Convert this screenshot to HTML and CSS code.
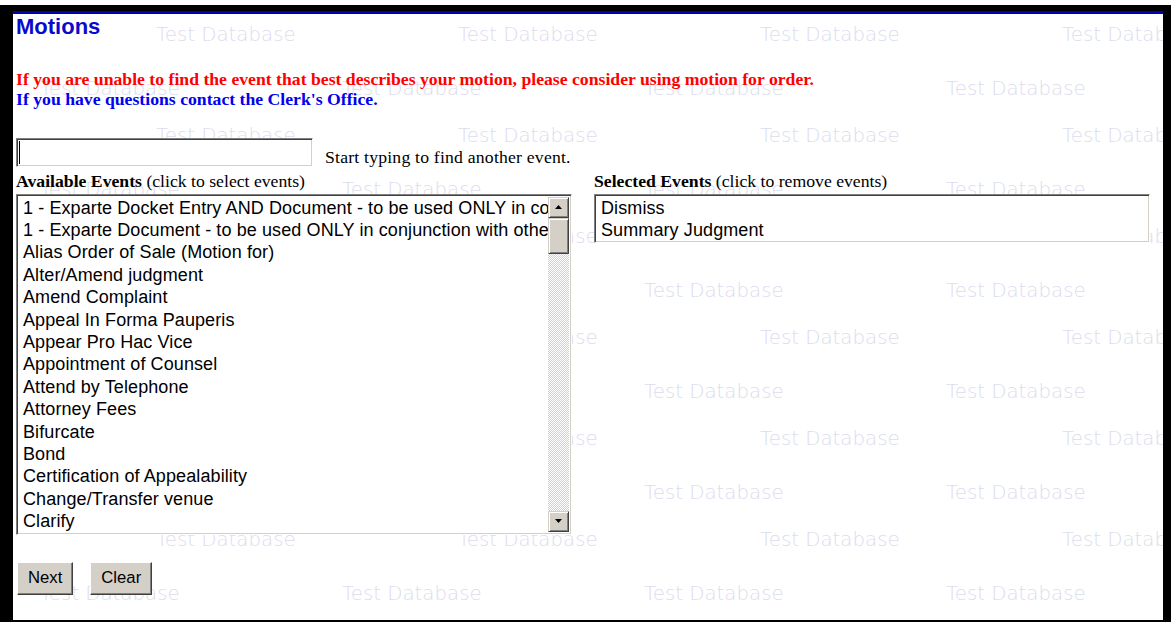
FILE: index.html
```html
<!DOCTYPE html>
<html lang="en">
<head>
<meta charset="utf-8">
<title>Motions</title>
<link rel="stylesheet" href="styles.css">
</head>
<body>
<div class="frame">
  <div class="watermark" aria-hidden="true">
    <div class="wm-row odd"><span>Test Database</span><span>Test Database</span><span>Test Database</span><span>Test Database</span></div>
    <div class="wm-row even"><span>Test Database</span><span>Test Database</span><span>Test Database</span><span>Test Database</span></div>
    <div class="wm-row odd"><span>Test Database</span><span>Test Database</span><span>Test Database</span><span>Test Database</span></div>
    <div class="wm-row even"><span>Test Database</span><span>Test Database</span><span>Test Database</span><span>Test Database</span></div>
    <div class="wm-row odd"><span>Test Database</span><span>Test Database</span><span>Test Database</span><span>Test Database</span></div>
    <div class="wm-row even"><span>Test Database</span><span>Test Database</span><span>Test Database</span><span>Test Database</span></div>
    <div class="wm-row odd"><span>Test Database</span><span>Test Database</span><span>Test Database</span><span>Test Database</span></div>
    <div class="wm-row even"><span>Test Database</span><span>Test Database</span><span>Test Database</span><span>Test Database</span></div>
    <div class="wm-row odd"><span>Test Database</span><span>Test Database</span><span>Test Database</span><span>Test Database</span></div>
    <div class="wm-row even"><span>Test Database</span><span>Test Database</span><span>Test Database</span><span>Test Database</span></div>
    <div class="wm-row odd"><span>Test Database</span><span>Test Database</span><span>Test Database</span><span>Test Database</span></div>
    <div class="wm-row even"><span>Test Database</span><span>Test Database</span><span>Test Database</span><span>Test Database</span></div>
  </div>

  <main class="page">
    <h1 class="title">Motions</h1>

    <p class="notice warn">If you are unable to find the event that best describes your motion, please consider using motion for order.</p>
    <p class="notice info">If you have questions contact the Clerk's Office.</p>

    <div class="search-row">
      <span class="field"><input class="search" type="text" aria-label="Find event"></span>
      <span class="hint">Start typing to find another event.</span>
    </div>

    <div class="events">
      <section class="col">
        <div class="col-label"><b>Available Events</b> (click to select events)</div>
        <div class="listbox tall">
          <ul class="options">
            <li>1 - Exparte Docket Entry AND Document - to be used ONLY in conjunction with other events</li>
            <li>1 - Exparte Document - to be used ONLY in conjunction with other events</li>
            <li>Alias Order of Sale (Motion for)</li>
            <li>Alter/Amend judgment</li>
            <li>Amend Complaint</li>
            <li>Appeal In Forma Pauperis</li>
            <li>Appear Pro Hac Vice</li>
            <li>Appointment of Counsel</li>
            <li>Attend by Telephone</li>
            <li>Attorney Fees</li>
            <li>Bifurcate</li>
            <li>Bond</li>
            <li>Certification of Appealability</li>
            <li>Change/Transfer venue</li>
            <li>Clarify</li>
            <li>Compel</li>
            <li>Consolidate</li>
            <li>Continue</li>
          </ul>
          <div class="scrollbar">
            <div class="sb-btn"><svg width="7" height="4" viewBox="0 0 7 4"><polygon points="3.5,0 7,4 0,4" fill="#000"/></svg></div>
            <div class="sb-thumb"></div>
            <div class="sb-track"></div>
            <div class="sb-btn"><svg width="7" height="4" viewBox="0 0 7 4"><polygon points="0,0 7,0 3.5,4" fill="#000"/></svg></div>
          </div>
        </div>
      </section>

      <section class="col">
        <div class="col-label"><b>Selected Events</b> (click to remove events)</div>
        <div class="listbox short">
          <ul class="options">
            <li>Dismiss</li>
            <li>Summary Judgment</li>
          </ul>
        </div>
      </section>
    </div>

    <div class="actions">
      <button class="btn" type="button">Next</button>
      <button class="btn" type="button">Clear</button>
    </div>
  </main>
</div>
</body>
</html>
```

FILE: styles.css
```css
html, body {
  margin: 0;
  padding: 0;
  background: #fff;
}

body {
  width: 1171px;
  height: 622px;
  overflow: hidden;
}

/* outer window frame */
.frame {
  position: relative;
  box-sizing: border-box;
  margin-top: 5px;
  height: 617px;
  border-style: solid;
  border-color: #000;
  border-width: 6px 8px 2px 13px;
  overflow: hidden;
  background: #fff;
}

/* tiled "Test Database" background text */
.watermark {
  position: absolute;
  top: 13.5px;
  left: 0;
  right: 0;
  display: grid;
  grid-template-rows: repeat(6, 54px 47px);
  font: 200 19.8px/20px "DejaVu Sans", sans-serif;
  color: #dcdcee;
  white-space: nowrap;
  pointer-events: none;
}

.wm-row {
  display: flex;
}

.wm-row span {
  flex: 0 0 302px;
}

.wm-row.odd {
  padding-left: 143px;
}

.wm-row.even {
  padding-left: 27px;
}

.page {
  position: relative;
  border-top: 3px solid #0000b4;
  padding-left: 3px;
}

.title {
  margin: 0;
  font: bold 22px/25px "Liberation Sans", Arial, sans-serif;
  color: #0a0acc;
}

.notice {
  margin: 0;
  font: bold 17.7px/20px "Liberation Serif", "Times New Roman", serif;
}

.warn {
  margin-top: 29.5px;
  color: #ff0000;
}

.info {
  color: #0000ee;
}

/* search box */
.search-row {
  display: flex;
  align-items: flex-end;
  gap: 12px;
  margin-top: 29.5px;
}

.field {
  position: relative;
  display: block;
}

.field::after {
  content: "";
  position: absolute;
  left: 3px;
  top: 3px;
  width: 1px;
  height: 23px;
  background: #000;
}

.search {
  display: block;
  box-sizing: border-box;
  width: 297px;
  height: 29px;
  margin: 0;
  padding: 1px 3px;
  font: 18px "Liberation Sans", Arial, sans-serif;
  background: #fff;
  border: 1px solid;
  border-color: #808080 #fff #fff #808080;
  box-shadow: inset 1px 1px #404040, inset -1px -1px #d4d0c8;
  outline: none;
}

.hint {
  display: block;
  font: 17.7px/20px "Liberation Serif", "Times New Roman", serif;
  letter-spacing: 0.2px;
  color: #000;
}

/* event pickers */
.events {
  display: flex;
  align-items: flex-start;
  gap: 22px;
  margin-top: 4px;
}

.col {
  width: 556px;
}

.col-label {
  font: 17.7px/20px "Liberation Serif", "Times New Roman", serif;
  color: #000;
  margin-bottom: 2.5px;
  white-space: nowrap;
}

.listbox {
  box-sizing: border-box;
  display: flex;
  background: #fff;
  border: 1px solid;
  border-color: #808080 #fff #fff #808080;
  box-shadow: inset 1px 1px #404040, inset -1px -1px #d4d0c8;
  padding: 2px;
  overflow: hidden;
}

.listbox.tall {
  height: 341px;
}

.listbox.short {
  height: 49px;
}

.options {
  flex: 1;
  min-width: 0;
  margin: 0;
  padding: 0;
  list-style: none;
  overflow: hidden;
  font: 18px/22.4px "Liberation Sans", Arial, sans-serif;
  letter-spacing: 0.1px;
  color: #000;
}

.options li {
  padding-left: 4px;
  white-space: nowrap;
  overflow: hidden;
}

/* classic scrollbar */
.scrollbar {
  flex: 0 0 21px;
  display: flex;
  flex-direction: column;
}

.sb-btn,
.sb-thumb {
  box-sizing: border-box;
  background: #d4d0c8;
  border: 1px solid;
  border-color: #d4d0c8 #404040 #404040 #d4d0c8;
  box-shadow: inset 1px 1px #fff, inset -1px -1px #808080;
}

.sb-btn {
  height: 21px;
  display: flex;
  align-items: center;
  justify-content: center;
}

.sb-btn svg {
  display: block;
}

.sb-thumb {
  height: 36px;
}

.sb-track {
  flex: 1;
  background: repeating-conic-gradient(#d4d0c8 0 25%, #fff 0 50%) 0 0 / 2px 2px;
}

/* form buttons */
.actions {
  display: flex;
  gap: 17px;
  margin-top: 27px;
  padding-left: 1px;
}

.btn {
  box-sizing: border-box;
  height: 33px;
  margin: 0;
  padding: 0 10px;
  font: 16.7px "Liberation Sans", Arial, sans-serif;
  color: #000;
  background: #d4d0c8;
  border: 1px solid;
  border-color: #fff #404040 #404040 #fff;
  box-shadow: inset -1px -1px #808080;
  border-radius: 0;
}
```
